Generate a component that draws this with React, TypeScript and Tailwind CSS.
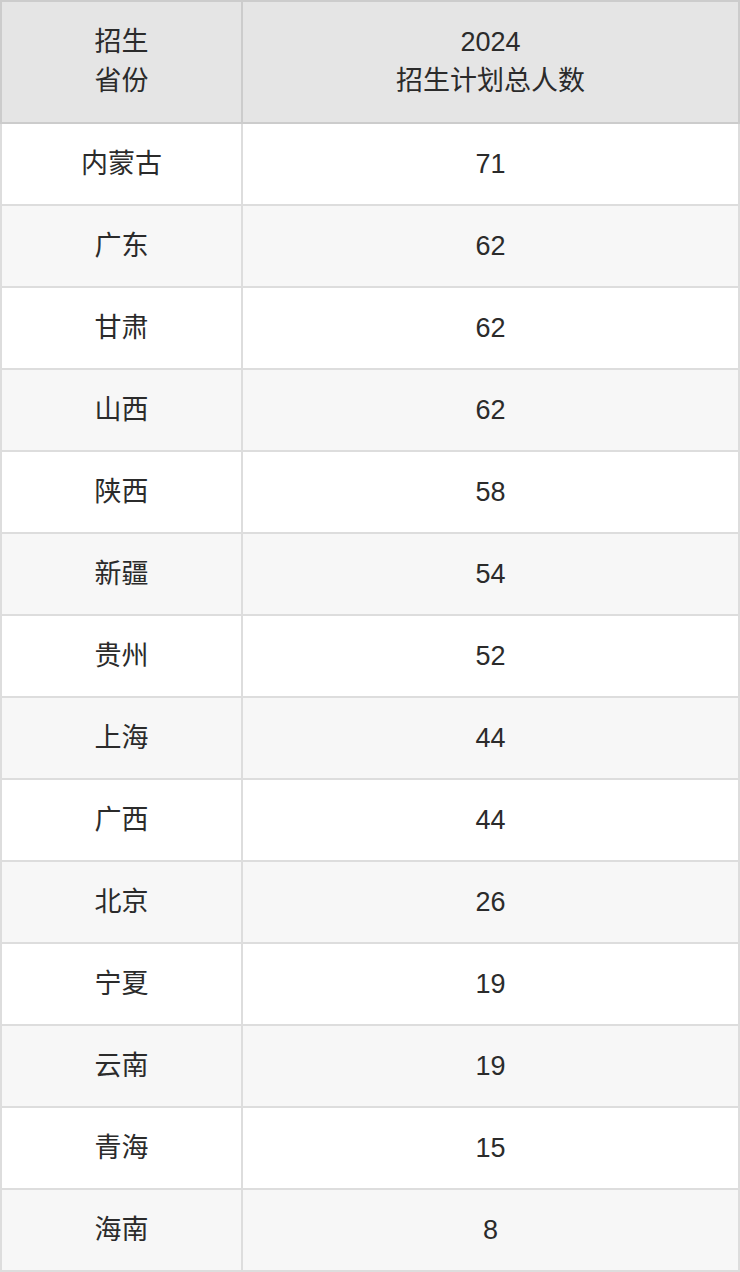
import React from "react";

const rows: [string, string][] = [
  ["内蒙古", "71"],
  ["广东", "62"],
  ["甘肃", "62"],
  ["山西", "62"],
  ["陕西", "58"],
  ["新疆", "54"],
  ["贵州", "52"],
  ["上海", "44"],
  ["广西", "44"],
  ["北京", "26"],
  ["宁夏", "19"],
  ["云南", "19"],
  ["青海", "15"],
  ["海南", "8"],
];

export default function App() {
  return (
    <div
      className="w-[740px] bg-white text-[#2b2b2b] text-[27px]"
      style={{ fontFamily: '"Liberation Sans", "Noto Sans CJK SC", sans-serif' }}
    >
      <table className="w-[740px] table-fixed border-collapse">
        <colgroup>
          <col className="w-[241px]" />
          <col />
        </colgroup>
        <thead>
          <tr className="h-[122px]">
            <th className="border-2 border-[#cccccc] bg-[#e5e5e5] font-normal leading-[39px] text-center">
              招生
              <br />
              省份
            </th>
            <th className="border-2 border-[#cccccc] bg-[#e5e5e5] font-normal leading-[39px] text-center">
              2024
              <br />
              招生计划总人数
            </th>
          </tr>
        </thead>
        <tbody>
          {rows.map(([p, n], i) => (
            <tr key={i} className={i % 2 === 0 ? "h-[82px] bg-white" : "h-[82px] bg-[#f7f7f7]"}>
              <td className="border-2 border-[#dddddd] text-center">{p}</td>
              <td className="border-2 border-[#dddddd] text-center">{n}</td>
            </tr>
          ))}
        </tbody>
      </table>
    </div>
  );
}
